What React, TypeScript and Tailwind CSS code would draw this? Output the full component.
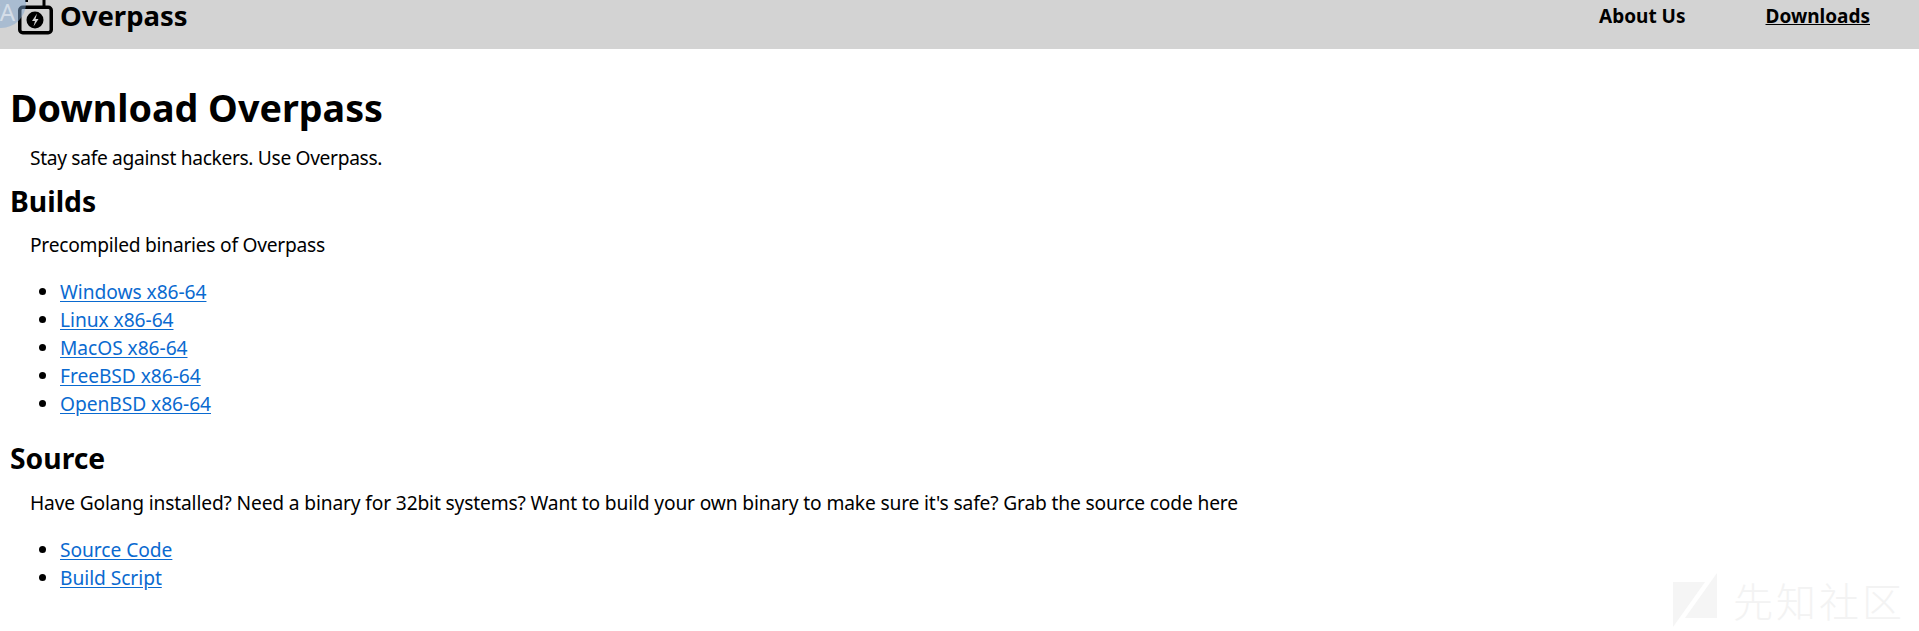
const builds = ["Windows x86-64", "Linux x86-64", "MacOS x86-64", "FreeBSD x86-64", "OpenBSD x86-64"];
const sources = ["Source Code", "Build Script"];

function LinkList({ items }: { items: string[] }) {
  return (
    <ul className="list-disc pl-[50px] mt-[19px] mb-[22px]">
      {items.map((item) => (
        <li key={item} className="h-[28px] leading-[28px]">
          <a href="#" className="text-[#0a6ad0] underline underline-offset-[2px] tracking-[-0.050px]">{item}</a>
        </li>
      ))}
    </ul>
  );
}

function Logo() {
  return (
    <svg width="35" height="36" viewBox="0 0 35 36" className="shrink-0">
      <path d="M8.500 2V0M26 7V0" stroke="#000" strokeWidth="3" fill="none" />
      <rect x="1.750" y="7.250" width="31.500" height="25.500" rx="3" fill="none" stroke="#000" strokeWidth="3.500" />
      <circle cx="17" cy="20" r="8.500" fill="#000" />
      <path d="M19 13.500l-5 7.500h3l-1.500 5.500 5-7.500h-3z" fill="#d3d3d3" />
    </svg>
  );
}

export default function App() {
  return (
    <div className="relative min-h-[631px] bg-white text-black font-['Noto_Sans','Open_Sans',sans-serif] text-[19.200px] overflow-hidden">
      <nav className="h-[49px] bg-[#d3d3d3] flex justify-between overflow-hidden">
        <div className="flex items-start gap-[7px] pl-[18px]">
          <Logo />
          <span className="text-[27.500px] leading-[32px] font-bold">Overpass</span>
        </div>
        <div className="flex gap-[80px] pr-[49px] pt-[3px] font-bold text-[19px] leading-[26px]">
          <a href="#">About Us</a>
          <a href="#" className="underline">Downloads</a>
        </div>
      </nav>
      <div className="absolute left-[-24px] top-[-22px] w-[50px] h-[50px] rounded-full bg-[#7fa6cf]/50 text-white/50 text-[24px] leading-[50px] text-right pr-[11px] pt-[9px] whitespace-nowrap">FA</div>
      <main className="px-[10px]">
        <h1 className="text-[37.700px] font-bold leading-[50px] mt-[34px]">Download Overpass</h1>
        <p className="pl-[20px] mt-[11px] leading-[28px] tracking-[-0.330px]">Stay safe against hackers. Use Overpass.</p>
        <h2 className="text-[28.300px] font-bold leading-[36px] mt-[11px]">Builds</h2>
        <p className="pl-[20px] mt-[12px] leading-[28px] tracking-[-0.250px]">Precompiled binaries of Overpass</p>
        <LinkList items={builds} />
        <h2 className="text-[28.300px] font-bold leading-[36px]">Source</h2>
        <p className="pl-[20px] mt-[13px] leading-[28px] tracking-[-0.150px]">Have Golang installed? Need a binary for 32bit systems? Want to build your own binary to make sure it's safe? Grab the source code here</p>
        <LinkList items={sources} />
      </main>
      <div className="absolute left-[1673px] top-[573px] flex items-center gap-[16px] text-[#f3f3f3]">
        <svg width="44" height="54" viewBox="0 0 44 54">
          <path d="M0 9h32L0 54zM44 0v45H12z" fill="#f5f5f5" />
        </svg>
        <span className="font-['Noto_Sans_CJK_SC',sans-serif] text-[40px] leading-[54px] font-light tracking-[3px]">先知社区</span>
      </div>
    </div>
  );
}
